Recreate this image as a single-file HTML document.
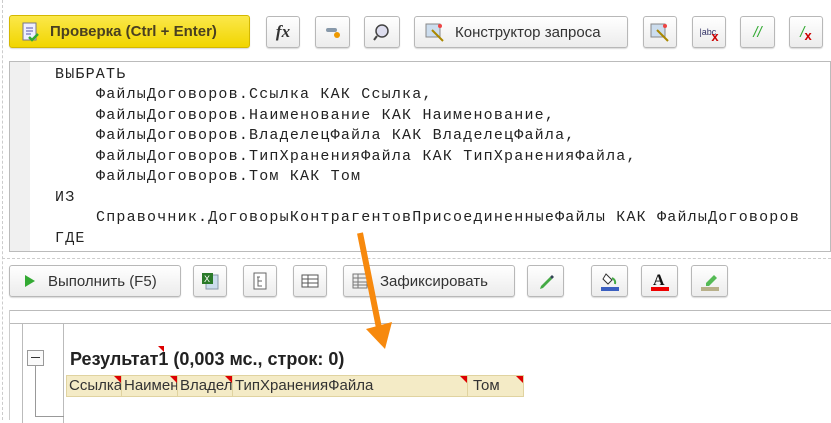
<!DOCTYPE html>
<html><head><meta charset="utf-8"><style>
body{margin:0;width:831px;height:420px;background:#fff;position:relative;overflow:hidden;font-family:"Liberation Sans",sans-serif}
.b{position:absolute;box-sizing:border-box;border:1px solid #b8b8b8;border-radius:3px;background:linear-gradient(#fff,#ececec);box-shadow:0 1px 1px rgba(0,0,0,.15);font-size:15px;color:#333;display:flex;align-items:center;justify-content:center}
.code{position:absolute;left:9px;top:61px;width:822px;height:191px;border:1px solid #bbb;box-sizing:border-box;font-family:"Liberation Mono",monospace;font-size:15px;letter-spacing:1.2px;color:#222}
.code div{position:absolute;white-space:pre}
.hdr{position:absolute;top:375px;height:22px;background:#f4ebc6;border:1px solid #e0d3a0;box-sizing:border-box;font-size:15px;color:#333;line-height:20px;padding-left:2px;overflow:hidden;white-space:nowrap}
.hdr:after{content:"";position:absolute;right:0;top:0;border-top:7px solid #d00;border-left:7px solid transparent}
</style></head><body>
<div style="position:absolute;left:2px;top:0;height:420px;border-left:1px dashed #ccc"></div>
<div class="b" style="left:9px;top:15px;width:241px;height:33px;background:linear-gradient(#fbe84a,#f1d500);border-color:#d4b800;font-weight:bold;color:#4a4020;justify-content:flex-start;padding-left:10px">
<svg width="20" height="20"><rect x="3" y="1" width="13" height="17" fill="#eef" stroke="#778"/><path d="M6 6h7M6 9h7M6 12h5" stroke="#55a"/><path d="M9 15l3 3 6-6" stroke="#3a3" stroke-width="2.5" fill="none"/></svg><span style="margin-left:10px">Проверка (Ctrl + Enter)</span></div>
<div class="b" style="left:266px;top:16px;width:34px;height:32px;font:italic bold 17px 'Liberation Serif',serif">fx</div>
<div class="b" style="left:315px;top:16px;width:35px;height:32px"><svg width="16" height="12"><rect x="1" y="2" width="11" height="4" rx="2" fill="#89a"/><circle cx="12" cy="9" r="3" fill="#e90"/></svg></div>
<div class="b" style="left:364px;top:16px;width:36px;height:32px"><svg width="18" height="18"><circle cx="9" cy="8" r="6" fill="#dde" stroke="#444" stroke-width="1.5"/><path d="M4 13l-3 4" stroke="#444" stroke-width="2"/></svg></div>
<div class="b" style="left:414px;top:16px;width:214px;height:32px;justify-content:flex-start;padding-left:10px"><svg width="20" height="20"><rect x="1" y="2" width="14" height="13" fill="#cde" stroke="#888"/><path d="M7 8l11 11" stroke="#a80" stroke-width="2"/><circle cx="15" cy="4" r="2" fill="#e44"/></svg><span style="margin-left:10px">Конструктор запроса</span></div>
<div class="b" style="left:643px;top:16px;width:34px;height:32px"><svg width="20" height="20"><rect x="1" y="2" width="14" height="13" fill="#cde" stroke="#888"/><path d="M7 8l11 11" stroke="#a80" stroke-width="2"/><circle cx="15" cy="4" r="2" fill="#e44"/></svg></div>
<div class="b" style="left:692px;top:16px;width:34px;height:32px;font-size:9px;color:#336">|abc<span style="color:#c00;font-size:13px;font-weight:bold;margin-left:-5px;margin-top:8px">x</span></div>
<div class="b" style="left:740px;top:16px;width:35px;height:32px;color:#3a3;font-style:italic;font-size:15px">//</div>
<div class="b" style="left:789px;top:16px;width:34px;height:32px;color:#3a3;font-style:italic;font-size:15px">/<span style="color:#c00;font-weight:bold;font-style:normal;font-size:13px;margin-top:6px">x</span></div>
<div class="code">
<div style="left:0;top:0;width:20px;height:189px;background:#f0f0f0"></div>
<div style="left:45px;top:4px">ВЫБРАТЬ</div>
<div style="left:86px;top:24px">ФайлыДоговоров.Ссылка КАК Ссылка,</div>
<div style="left:86px;top:45px">ФайлыДоговоров.Наименование КАК Наименование,</div>
<div style="left:86px;top:65px">ФайлыДоговоров.ВладелецФайла КАК ВладелецФайла,</div>
<div style="left:86px;top:86px">ФайлыДоговоров.ТипХраненияФайла КАК ТипХраненияФайла,</div>
<div style="left:86px;top:106px">ФайлыДоговоров.Том КАК Том</div>
<div style="left:45px;top:127px">ИЗ</div>
<div style="left:86px;top:147px">Справочник.ДоговорыКонтрагентовПрисоединенныеФайлы КАК ФайлыДоговоров</div>
<div style="left:45px;top:168px">ГДЕ</div>
</div>
<div style="position:absolute;left:2px;right:0;top:258px;border-top:1px dashed #ccc"></div>
<div class="b" style="left:9px;top:265px;width:172px;height:32px;justify-content:flex-start;padding-left:14px"><svg width="12" height="14"><path d="M1 1l10 6-10 6z" fill="#3a3"/></svg><span style="margin-left:12px">Выполнить (F5)</span></div>
<div class="b" style="left:193px;top:265px;width:34px;height:32px"><svg width="18" height="18"><rect x="5" y="3" width="12" height="14" fill="#cde" stroke="#89a"/><rect x="1" y="1" width="11" height="11" fill="#2a7a2a"/><text x="3" y="10" font-size="9" fill="#fff" font-family="Liberation Sans">X</text></svg></div>
<div class="b" style="left:243px;top:265px;width:34px;height:32px"><svg width="14" height="18"><rect x="1" y="1" width="12" height="16" fill="#fff" stroke="#666"/><path d="M4 5h3M5 5v9h4M5 9h4" stroke="#666" fill="none"/></svg></div>
<div class="b" style="left:293px;top:265px;width:34px;height:32px"><svg width="18" height="14"><rect x="1" y="1" width="16" height="12" fill="#fff" stroke="#555"/><path d="M1 5h16M1 9h16M7 1v12" stroke="#555"/></svg></div>
<div class="b" style="left:343px;top:265px;width:172px;height:32px;justify-content:flex-start;padding-left:8px"><svg width="16" height="16"><rect x="1" y="1" width="14" height="14" fill="#eee" stroke="#777"/><path d="M1 5h14M1 9h14M1 12h14M6 1v14" stroke="#777"/></svg><span style="margin-left:12px">Зафиксировать</span></div>
<div class="b" style="left:527px;top:265px;width:37px;height:32px"><svg width="16" height="16"><path d="M3 13l9-9 2 2-9 9-3 1z" fill="#4a4"/><path d="M12 4l2-2 2 2-2 2z" fill="#345"/></svg></div>
<div class="b" style="left:591px;top:265px;width:37px;height:32px"><svg width="20" height="20"><path d="M6 3l6 6-4 4-5-5z" fill="#fff" stroke="#333"/><path d="M12 7q4 2 3 6" stroke="#4a4" stroke-width="2" fill="none"/><rect x="1" y="16" width="18" height="4" fill="#3b5fc0"/></svg></div>
<div class="b" style="left:641px;top:265px;width:37px;height:32px"><svg width="20" height="20"><text x="3" y="14" font-size="16" font-weight="bold" font-family="Liberation Serif" fill="#111">A</text><rect x="1" y="16" width="18" height="4" fill="#e00"/></svg></div>
<div class="b" style="left:691px;top:265px;width:37px;height:32px"><svg width="20" height="20"><path d="M6 12l8-8 3 3-8 8H6z" fill="#5b5"/><rect x="1" y="16" width="18" height="4" fill="#b8b08a"/></svg></div>
<div style="position:absolute;left:9px;right:0;top:310px;border-top:1px solid #bbb"></div>
<div style="position:absolute;left:9px;right:0;top:323px;border-top:1px solid #bbb"></div>
<div style="position:absolute;left:9px;top:310px;height:110px;border-left:1px solid #ccc"></div>
<div style="position:absolute;left:22px;top:323px;width:42px;height:100px;border:1px solid #bbb;border-bottom:0;box-sizing:border-box"></div>
<div style="position:absolute;left:27px;top:350px;width:17px;height:16px;border:1px solid #999;box-sizing:border-box;background:#fafafa"><div style="position:absolute;left:3px;top:6px;width:9px;border-top:1px solid #333"></div></div>
<div style="position:absolute;left:35px;top:366px;height:50px;border-left:1px solid #999"></div>
<div style="position:absolute;left:35px;top:416px;width:29px;border-top:1px solid #999"></div>
<div style="position:absolute;left:70px;top:349px;font-size:18px;font-weight:bold;color:#222;white-space:nowrap">Результат1 (0,003 мс., строк: 0)</div>
<div style="position:absolute;left:158px;top:346px;border-top:6px solid #d00;border-left:6px solid transparent"></div>
<div class="hdr" style="left:66px;width:56px">Ссылка</div>
<div class="hdr" style="left:121px;width:57px">Наименование</div>
<div class="hdr" style="left:177px;width:56px">Владелец</div>
<div class="hdr" style="left:232px;width:236px">ТипХраненияФайла</div>
<div class="hdr" style="left:467px;width:57px;padding-left:5px">Том</div>
<svg style="position:absolute;left:0;top:0" width="831" height="420"><path d="M360 233L379 328" stroke="#f7890d" stroke-width="6"/><path d="M366 329L392 322L385 349Z" fill="#f7890d"/></svg>
</body></html>
